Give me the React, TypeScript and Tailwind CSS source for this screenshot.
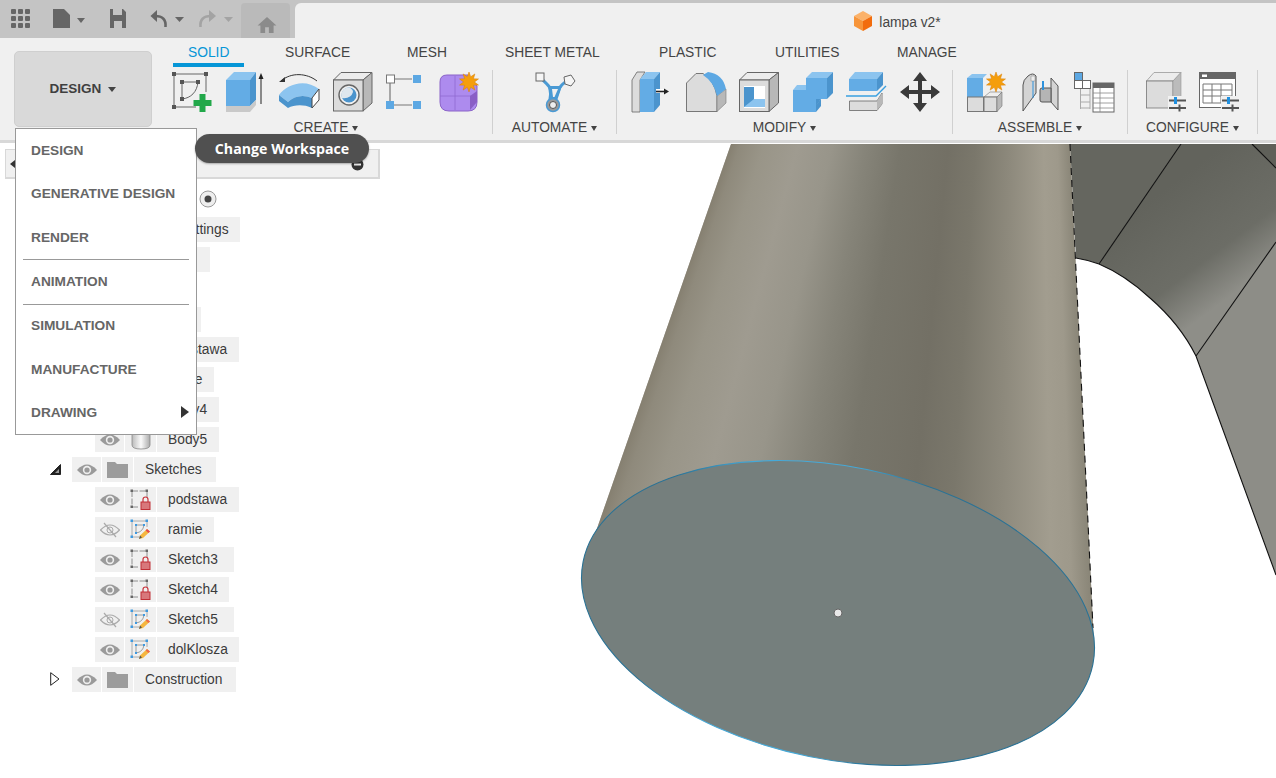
import React from 'react';

// ---- small drawn glyphs ----
const Caret = ({ className = 'border-t-[#444]' }: { className?: string }) => (
  <span className={`inline-block w-0 h-0 border-l-[4px] border-r-[4px] border-t-[5px] border-l-transparent border-r-transparent ${className}`} />
);

const SmallCaret = () => (
  <span className="inline-block w-0 h-0 border-l-[3px] border-r-[3px] border-t-[5px] border-l-transparent border-r-transparent border-t-[#444]" />
);

const Ic = ({ children }: { children: React.ReactNode }) => (
  <svg width="40" height="40" viewBox="0 0 40 40" className="shrink-0 overflow-visible">{children}</svg>
);

const Star = ({ cx, cy, r }: { cx: number; cy: number; r: number }) => {
  const pts: string[] = [];
  for (let i = 0; i < 20; i++) {
    const a = (i * Math.PI) / 10 - Math.PI / 2;
    const q = i % 2 ? r * 0.55 : r;
    pts.push(`${cx + q * Math.cos(a)},${cy + q * Math.sin(a)}`);
  }
  return <polygon points={pts.join(' ')} fill="#f59e0b" stroke="#d97f06" strokeWidth="0.5" />;
};

const SketchIcon = () => (
  <Ic>
    <path d="M2 2H34M2 2V35M2 35H24M34 2V20" stroke="#666" strokeWidth="1" fill="none" />
    <path d="M10 10H26M10 10V27M26 10C25 20 19 26 10 27" stroke="#666" strokeWidth="1" fill="none" />
    {[[0, 0], [32, 0], [0, 33], [8, 8], [24, 8], [8, 25]].map(([x, y], i) => (
      <rect key={i} x={x} y={y} width="4" height="4" fill="#555" />
    ))}
    <path d="M27.5 22h6v6h6v6h-6v6h-6v-6h-6v-6h6z" fill="#22a84a" />
  </Ic>
);

const ExtrudeIcon = () => (
  <Ic>
    <polygon points="0,8 8,0 30,0 24,8" fill="#8cc4ef" />
    <polygon points="0,8 24,8 24,34 0,34" fill="#63ace5" />
    <polygon points="24,8 30,0 30,28 24,34" fill="#4b94cd" />
    <polygon points="0,34 24,34 30,28 30,33 24,40 0,40" fill="#c9c9c9" />
    <path d="M35 4V32" stroke="#222" strokeWidth="1" />
    <polygon points="35,1 32.5,7 37.5,7" fill="#222" />
  </Ic>
);

const RevolveIcon = () => (
  <Ic>
    <path d="M2 9C12 0 28 1 38 9" stroke="#333" strokeWidth="1" fill="none" />
    <polygon points="0,10 6,5 6,10" fill="#333" />
    <path d="M0 23C8 12 26 6 40 17L33 26C24 22 15 24 9 30Z" fill="#8cc4ef" />
    <path d="M0 23L9 30C15 24 24 22 33 26V36C24 32 15 33 9 36L0 29Z" fill="#4b94cd" />
    <polygon points="33,26 40,17 40,28 33,36" fill="#fff" stroke="#444" strokeWidth="1" />
  </Ic>
);

const HoleIcon = () => (
  <Ic>
    <polygon points="0.5,8 8,0.5 39,0.5 30,8" fill="#ececec" stroke="#666" />
    <polygon points="30,8 39,0.5 39,31 30,39" fill="#b8b8b8" stroke="#666" />
    <rect x="0.5" y="8" width="29.5" height="31" fill="#dcdcdc" stroke="#666" />
    <circle cx="16" cy="23" r="10" fill="#f0f0f0" stroke="#666" strokeWidth="1.4" />
    <circle cx="16" cy="23" r="7.5" fill="#4b94cd" />
    <path d="M16 15.5A7.5 7.5 0 0 0 9 26Q18 27 20 20Q20 17 16 15.5Z" fill="#dfe7ee" />
  </Ic>
);

const PatternIcon = () => (
  <Ic>
    <path d="M8 7H26M4 11V29M8 33H26" stroke="#777" strokeWidth="1.2" />
    <rect x="0.5" y="3" width="8" height="8" fill="#fff" stroke="#777" />
    <rect x="27" y="3" width="8" height="8" fill="#5da8e3" />
    <rect x="0" y="29" width="8" height="8" fill="#5da8e3" />
    <rect x="27" y="29" width="8" height="8" fill="#5da8e3" />
  </Ic>
);

const PurpleIcon = () => (
  <Ic>
    <path d="M7 3H28L37 14V30Q37 39 28 39H9Q0 39 0 30V10Q0 3 7 3Z" fill="#ad8bee" stroke="#8a63c8" />
    <path d="M0 24H31M15 4V38" stroke="#8f6ad0" strokeWidth="0.8" />
    <polygon points="30,24 37,19 37,30 30,38" fill="#8a5fc6" />
    <Star cx={29} cy={10} r={10} />
  </Ic>
);

const AutomateIcon = () => (
  <Ic>
    <path d="M7 7C12 13 15 13 16 19L15 27H21L24 18C25 13 28 12 32 9" fill="none" stroke="#4a9ad4" strokeWidth="3" />
    <polygon points="13,14 27,14 21,29 15,29" fill="#4a9ad4" />
    <polygon points="17,17 23,17 19.5,25 18,25" fill="#f0f0f0" />
    <rect x="1" y="1" width="8" height="8" fill="#f5f5f5" stroke="#666" />
    <polygon points="29,5 36,3 40,9 36,14 30,12" fill="#f5f5f5" stroke="#666" />
    <circle cx="18" cy="33" r="6.5" fill="#9a9a9a" stroke="#4a9ad4" strokeWidth="1.5" />
    <circle cx="18" cy="33" r="3.5" fill="#eee" stroke="#555" />
  </Ic>
);

const PressPullIcon = () => (
  <Ic>
    <polygon points="0,8 5,0 13,0 8,8 8,40 0,40" fill="#dcdcdc" stroke="#666" strokeWidth="0.8" />
    <polygon points="8,7 14,0 28,0 22,7" fill="#8cc4ef" />
    <rect x="8" y="7" width="14" height="33" fill="#63ace5" />
    <polygon points="22,7 28,0 28,33 22,40" fill="#4b94cd" />
    <path d="M24 19H34" stroke="#fff" strokeWidth="4" />
    <path d="M24 19.5H33" stroke="#222" strokeWidth="1.6" />
    <polygon points="37,19.5 32,16.5 32,22.5" fill="#222" />
  </Ic>
);

const FilletIcon = () => (
  <Ic>
    <path d="M0.5 39.5V11L10 1.5H17Q28 8 31 24V39.5Z" fill="#dcdcdc" stroke="#777" />
    <polygon points="31,24 40,17 40,31 31,39.5" fill="#b8b8b8" stroke="#777" strokeWidth="0.6" />
    <path d="M17 3L22 0Q37 2 40 17L31 24Q28 10 17 3Z" fill="#5da8e3" />
  </Ic>
);

const ShellIcon = () => (
  <Ic>
    <polygon points="0.5,8 8,0.5 39.5,0.5 30,8" fill="#ececec" stroke="#666" />
    <polygon points="30,8 39.5,0.5 39.5,31 30,39.5" fill="#b8b8b8" stroke="#666" />
    <rect x="0.5" y="8" width="29.5" height="31.5" fill="#dcdcdc" stroke="#666" />
    <rect x="5" y="14" width="21" height="22" fill="#fff" />
    <polygon points="5,15 15,15 15,27 26,27 26,35 5,35" fill="#8cc4ef" />
    <polygon points="5,15 15,15 15,27 5,35" fill="#4b94cd" />
  </Ic>
);

const CombineIcon = () => (
  <Ic>
    <polygon points="13,6 19,0 40,0 34,6" fill="#8cc4ef" />
    <rect x="13" y="6" width="21" height="21" fill="#63ace5" />
    <polygon points="34,6 40,0 40,21 34,27" fill="#4b94cd" />
    <polygon points="0,18 4,13 13,13 13,18" fill="#8cc4ef" />
    <rect x="0" y="18" width="23" height="22" fill="#63ace5" />
    <polygon points="23,27 28,27 23,34" fill="#4b94cd" />
    <polygon points="23,33 28,27 28,34 23,40" fill="#4b94cd" />
  </Ic>
);

const SplitIcon = () => (
  <Ic>
    <polygon points="3,7 9,0 37,0 31,7" fill="#8cc4ef" />
    <rect x="3" y="7" width="28" height="12" fill="#63ace5" />
    <polygon points="31,7 37,0 37,13 31,19" fill="#4b94cd" />
    <path d="M0 24H30L40 14" stroke="#3aa0e0" strokeWidth="1.4" fill="none" />
    <polygon points="3.5,29 31,29 36,21 36,32 31,38.5 3.5,38.5" fill="#dcdcdc" stroke="#666" strokeWidth="0.8" />
    <polygon points="31,29 36,21 36,32 31,38.5" fill="#b8b8b8" />
  </Ic>
);

const MoveIcon = () => (
  <Ic>
    <path d="M20 0L27 9H22V18H31V13L40 20L31 27V22H22V31H27L20 40L13 31H18V22H9V27L0 20L9 13V18H18V9H13Z" fill="#3a3a3a" />
  </Ic>
);

const NewComponentIcon = () => (
  <Ic>
    <polygon points="0,6 5,2 20,2 16,6" fill="#8cc4ef" />
    <rect x="0" y="6" width="16" height="19" fill="#63ace5" />
    <rect x="0.5" y="25" width="16" height="14.5" fill="#dcdcdc" stroke="#777" />
    <polygon points="17,25 23,20 35,20 30,25" fill="#eee" stroke="#777" strokeWidth="0.6" />
    <rect x="17" y="25" width="13" height="14.5" fill="#dcdcdc" stroke="#777" />
    <polygon points="30,25 35,20 35,34 30,39.5" fill="#b8b8b8" stroke="#777" strokeWidth="0.6" />
    <Star cx={29} cy={10} r={10} />
  </Ic>
);

const JointIcon = () => (
  <Ic>
    <path d="M3 39V13Q3 8 8 4Q13 0 16 4V21L3 39Z" fill="#d4d4d4" stroke="#555" />
    <rect x="11" y="4" width="4" height="5" fill="#eee" stroke="#888" strokeWidth="0.5" />
    <path d="M13 9V26" stroke="#2e92dc" strokeWidth="1" />
    <path d="M31 6L38 14V38L31 30Z" fill="#d4d4d4" stroke="#555" />
    <path d="M22 16H31V30H22Q20 30 20 28V18Q20 16 22 16Z" fill="#b5b5b5" stroke="#555" />
    <path d="M23 9V18" stroke="#2e92dc" strokeWidth="2" />
  </Ic>
);

const TimelineIcon = () => (
  <Ic>
    <rect x="0.5" y="0.5" width="8" height="8" fill="#5da8e3" stroke="#666" />
    <rect x="0.5" y="8.5" width="8" height="8" fill="#fff" stroke="#666" />
    <rect x="8.5" y="8.5" width="8" height="8" fill="#fff" stroke="#666" />
    <path d="M6.5 17V37M16 17V37M6.5 23H16M6.5 30H16M6.5 36H16" stroke="#aaa" strokeWidth="1" />
    <rect x="19" y="11" width="21" height="29" fill="#fff" stroke="#666" />
    <rect x="19" y="11" width="21" height="5" fill="#666" />
    <path d="M19 21H40M19 26H40M19 31H40M19 36H40M26 16V40" stroke="#888" strokeWidth="0.8" />
  </Ic>
);

const Slider = ({ x, y }: { x: number; y: number }) => (
  <g transform={`translate(${x} ${y})`}>
    <rect x="-1" y="-3" width="19" height="16" fill="#f0f0f0" />
    <path d="M0 1.5H17M0 9H17" stroke="#555" strokeWidth="2" />
    <rect x="5" y="-2" width="3" height="7" fill="#1f90e0" />
    <rect x="9.5" y="5.5" width="2" height="7" fill="#555" />
  </g>
);

const ConfigCubeIcon = () => (
  <Ic>
    <polygon points="0.5,9 8,0.5 35,0.5 27,9" fill="#ececec" stroke="#999" strokeWidth="0.8" />
    <rect x="0.5" y="9" width="26.5" height="27" fill="#dcdcdc" stroke="#777" strokeWidth="0.8" />
    <polygon points="27,9 35,0.5 35,28 27,36" fill="#bbb" stroke="#999" strokeWidth="0.6" />
    <Slider x={23} y={27} />
  </Ic>
);

const ConfigTableIcon = () => (
  <Ic>
    <rect x="0.5" y="0.5" width="36" height="35" fill="#fff" stroke="#666" />
    <rect x="0" y="0" width="37" height="7" fill="#666" />
    <rect x="3" y="2.5" width="5" height="2.5" fill="#fff" />
    <path d="M4 12H33V31H4ZM4 18H33M4 24H33M13 12V31M22 12V31" fill="none" stroke="#777" />
    <Slider x={23} y={27} />
  </Ic>
);

// ---- browser tree glyphs ----
const Eye = ({ off }: { off?: boolean }) =>
  off ? (
    <svg width="20" height="16" viewBox="0 0 20 16">
      <path d="M0.5 8Q10 -2 19.5 8Q10 18 0.5 8Z" fill="none" stroke="#aaa" strokeWidth="1.2" />
      <circle cx="10" cy="8" r="3" fill="none" stroke="#aaa" />
      <path d="M4 1L16 15" stroke="#aaa" strokeWidth="1.2" />
    </svg>
  ) : (
    <svg width="20" height="14" viewBox="0 0 20 14">
      <path d="M0 7Q10 -4 20 7Q10 18 0 7Z" fill="#9a9a9a" />
      <circle cx="10" cy="7" r="4.2" fill="#eee" />
      <circle cx="10" cy="7" r="2.6" fill="#9a9a9a" />
    </svg>
  );

const Folder = () => (
  <svg width="21" height="16" viewBox="0 0 21 16">
    <path d="M0 0H8L10 2H21V16H0Z" fill="#9c9c9c" />
  </svg>
);

const Cylinder = () => (
  <svg width="20" height="20" viewBox="0 0 20 20">
    <defs>
      <linearGradient id="cyl" x1="0" x2="1" y1="0" y2="0">
        <stop offset="0" stopColor="#bbb" />
        <stop offset="0.5" stopColor="#fafafa" />
        <stop offset="1" stopColor="#aaa" />
      </linearGradient>
    </defs>
    <path d="M1 0V15Q1 19 10 19Q19 19 19 15V0Z" fill="url(#cyl)" stroke="#888" strokeWidth="0.8" />
  </svg>
);

const TreeSketch = ({ kind }: { kind: 'lock' | 'edit' | 'editRed' }) => {
  const c = kind === 'lock' ? '#666' : '#3f9ae0';
  return (
    <svg width="21" height="21" viewBox="0 0 21 21">
      <path d="M2 2H17M2 2V18M2 18H9M17 2V8" stroke={kind === 'lock' ? '#777' : '#999'} strokeWidth="0.8" fill="none" strokeDasharray={kind === 'lock' ? '6 1.5' : undefined} />
      {kind !== 'lock' && <path d="M6 6H14M6 6V14M14 6Q13 13 6 14" stroke="#888" strokeWidth="0.8" fill="none" />}
      {[[0.5, 0.5], [15.5, 0.5], [0.5, 16.5]].map(([x, y], i) => (
        <rect key={i} x={x} y={y} width="2.5" height="2.5" fill={c} />
      ))}
      {kind !== 'lock' && [[5, 5], [13, 5], [5, 13]].map(([x, y], i) => (
        <rect key={i} x={x} y={y} width="2" height="2" fill={c} />
      ))}
      {kind === 'lock' ? (
        <g>
          <path d="M13 13V10.5Q13 8 15.5 8Q18 8 18 10.5V13" fill="none" stroke="#c8343c" strokeWidth="1.2" />
          <rect x="11" y="13" width="9" height="7.5" fill="#d8777b" stroke="#c02f36" />
        </g>
      ) : (
        <g>
          <path d="M9 20L10 16.5L17 10L20 12.5L13 19Z" fill="#f5b63f" />
          <path d="M17 10L20 12.5L18.5 14L15.6 11.4Z" fill={kind === 'editRed' ? '#e5484d' : '#ef6b4a'} />
          <path d="M9 20L10 16.5L12 18.5Z" fill="#555" />
        </g>
      )}
    </svg>
  );
};

type Row = { left: number; name: string; nameW: number; icon: React.ReactNode; off?: boolean; radio?: boolean; tri?: 'open' | 'closed' };

const rows: Row[] = [
  { left: 28, name: '', nameW: 97, icon: <Folder />, radio: true },
  { left: 39, name: 'Document Settings', nameW: 139, icon: <Folder /> },
  { left: 43, name: '', nameW: 105, icon: <Folder /> },
  { left: 72, name: '', nameW: 50, icon: <Folder /> },
  { left: 72, name: '', nameW: 67, icon: <Folder /> },
  { left: 95, name: 'podstawa', nameW: 82, icon: <Cylinder /> },
  { left: 95, name: 'ramie', nameW: 57, icon: <Cylinder /> },
  { left: 95, name: 'Body4', nameW: 62, icon: <Cylinder /> },
  { left: 95, name: 'Body5', nameW: 62, icon: <Cylinder /> },
  { left: 72, name: 'Sketches', nameW: 82, icon: <Folder />, tri: 'open' },
  { left: 95, name: 'podstawa', nameW: 82, icon: <TreeSketch kind="lock" /> },
  { left: 95, name: 'ramie', nameW: 57, icon: <TreeSketch kind="editRed" />, off: true },
  { left: 95, name: 'Sketch3', nameW: 77, icon: <TreeSketch kind="lock" /> },
  { left: 95, name: 'Sketch4', nameW: 72, icon: <TreeSketch kind="lock" /> },
  { left: 95, name: 'Sketch5', nameW: 77, icon: <TreeSketch kind="edit" />, off: true },
  { left: 95, name: 'dolKlosza', nameW: 82, icon: <TreeSketch kind="edit" /> },
  { left: 72, name: 'Construction', nameW: 102, icon: <Folder />, tri: 'closed' },
];

// ---- viewport drawing ----
const coneStops: [number, string][] = [
  [0, '#857f70'],
  [0.03, '#8f8a7c'],
  [0.1, '#999588'],
  [0.2, '#9f9b90'],
  [0.3, '#98958a'],
  [0.4, '#868479'],
  [0.5, '#78766b'],
  [0.64, '#737065'],
  [0.72, '#7a776b'],
  [0.82, '#8d897c'],
  [0.92, '#a29d8f'],
  [0.96, '#9e998b'],
  [1, '#888476'],
];

// one gradient stretched over every scanline, so the shading fans out with the cone
const ConeRows = () => {
  const out: React.ReactNode[] = [];
  for (let y = 144; y < 650; y++) {
    const f = y - 144;
    const l = 731 - (145 / 416) * f;
    const r = 1070 + (24 / 501) * f;
    out.push(<rect key={y} x={l - 1} y={y} width={r - l + 2} height="1.5" fill="url(#coneShade)" />);
  }
  return <g clipPath="url(#coneClip)">{out}</g>;
};

const Viewport = () => (
  <svg className="absolute inset-0" width="1276" height="635" viewBox="0 143 1276 635">
    <defs>
      <linearGradient id="arm2" gradientUnits="userSpaceOnUse" x1="1150" y1="200" x2="1225" y2="300">
        <stop offset="0" stopColor="#62635c" />
        <stop offset="0.65" stopColor="#6c6d66" />
        <stop offset="1" stopColor="#8e8e88" />
      </linearGradient>
      <linearGradient id="coneShade" x1="0" x2="1" y1="0" y2="0">
        {coneStops.map(([o, c]) => (
          <stop key={o} offset={o} stopColor={c} />
        ))}
      </linearGradient>
      <linearGradient id="rim" gradientUnits="userSpaceOnUse" x1="650" y1="0" x2="900" y2="0">
        <stop offset="0" stopColor="#2a7295" />
        <stop offset="0.3" stopColor="#45a9d8" />
        <stop offset="0.7" stopColor="#45a9d8" />
        <stop offset="1" stopColor="#2a7295" />
      </linearGradient>
      <clipPath id="coneClip">
        <polygon points="731,144 1070,144 1094,645 586,560" />
      </clipPath>
    </defs>
    <path d="M1070 144H1181L1099 264Q1088 260 1076 258Z" fill="#65665f" />
    <path d="M1181 144H1252L1276 168V242L1196 356Q1180 324 1150 298Q1125 275 1099 264Z" fill="url(#arm2)" />
    <polygon points="1252,144 1276,144 1276,168" fill="#5f6059" />
    <polygon points="1196,356 1276,242 1276,575" fill="#8d8d87" />
    <path d="M1181 144L1099 264M1252 144L1276 168M1276 242L1196 356" stroke="#111" strokeWidth="1.1" fill="none" />
    <path d="M1076 258Q1088 260 1099 264Q1125 275 1150 298Q1180 324 1196 356L1276 575" stroke="#111" strokeWidth="1.1" fill="none" />
    <ConeRows />
    <path d="M1070 144L1093 628" stroke="#111" strokeWidth="1.1" strokeDasharray="7 5" fill="none" />
    <ellipse cx="838" cy="613" rx="260" ry="146.4" transform="rotate(11.4 838 613)" fill="#757f7d" stroke="url(#rim)" strokeWidth="1.1" />
    <circle cx="838" cy="613" r="4" fill="#e8e8e8" stroke="#666" strokeWidth="1" />
    <rect x="0" y="143" width="1276" height="1" fill="#fff" />
  </svg>
);

const App: React.FC = () => {
  return (
    <div className="relative w-[1276px] h-[778px] overflow-hidden bg-white flex flex-col font-['Liberation_Sans',Arial,sans-serif] text-[13.8px] text-[#444]">
      {/* Title bar */}
      <div className="h-[38px] bg-[#c4c4c4] flex shrink-0 pt-[3px]">
        <div className="w-[241px] relative flex items-start">
          <svg width="241" height="35" viewBox="0 0 241 35" className="shrink-0">
            <g fill="#666">
              {[0, 7, 14].flatMap((y) => [0, 7, 14].map((x) => (
                <rect key={`${x}-${y}`} x={11 + x} y={6 + y} width="5" height="5" rx="1" />
              )))}
              <path d="M53 6H64L70 12V25H53Z" />
              <path d="M77 15H85L81 20Z" />
              <path d="M110 6H123L126 9V25H110ZM113 6V12H122V6ZM114 18V25H122V18Z" fillRule="evenodd" />
              <path d="M175 14H184L179.5 19Z" />
            </g>
            <path d="M165.5 24Q166.5 13 155 13" stroke="#666" strokeWidth="2.6" fill="none" />
            <polygon points="150.5,13 157,7 157,19" fill="#666" />
            <path d="M200.5 24Q199.5 13 211 13" stroke="#a3a3a3" strokeWidth="2.6" fill="none" />
            <polygon points="216,13 209,7 209,19" fill="#a3a3a3" />
            <path d="M224 14H233L228.5 19Z" fill="#a3a3a3" />
          </svg>
        </div>
        <div className="w-[49px] bg-[#bababa] rounded-t-[4px] flex items-center justify-center pt-[8px] pl-[2px]">
          <svg width="20" height="16" viewBox="0 0 20 17">
            <path d="M10 0L20 9H17V17H12V11H8V17H3V9H0Z" fill="#8b8b8b" />
          </svg>
        </div>
        <div className="w-[5px]" />
        <div className="flex-1 bg-[#f0f0f0] rounded-tl-[6px] flex items-center justify-center pl-[224px] pt-[5px] gap-[7px]">
          <svg width="18" height="20" viewBox="0 0 18 20" className="mb-[4px]">
            <polygon points="9,0 18,5 9,10 0,5" fill="#fbb26a" />
            <polygon points="0,5 9,10 9,20 0,15" fill="#f7953a" />
            <polygon points="18,5 9,10 9,20 18,15" fill="#f26c0d" />
          </svg>
          <span className="text-[#444]">lampa v2*</span>
        </div>
      </div>

      {/* Ribbon */}
      <div className="h-[105px] bg-[#f0f0f0] border-b-[3px] border-[#d8d8d8] flex shrink-0 pl-[14px]">
        <div className="pt-[13px] w-[146px] shrink-0">
          <div className="w-[138px] h-[76px] bg-[#d9d9d9] border border-[#cfcfcf] rounded-[5px] flex items-center justify-center gap-[7px]">
            <span className="font-bold text-[13.5px] text-[#3f3f3f]">DESIGN</span>
            <Caret />
          </div>
        </div>
        <div className="flex-1 flex flex-col">
          <div className="relative h-[29px] flex items-center shrink-0 pt-[2px]">
            <div className="absolute left-[13px] top-[25px] w-[71px] h-[4px] bg-[#0696d7]" />
            <span className="ml-[28px] w-[97px] text-[#0696d7]">SOLID</span>
            <span className="w-[122px]">SURFACE</span>
            <span className="w-[98px]">MESH</span>
            <span className="w-[154px]">SHEET METAL</span>
            <span className="w-[116px]">PLASTIC</span>
            <span className="w-[122px]">UTILITIES</span>
            <span>MANAGE</span>
          </div>
          <div className="flex-1 flex pt-[3px]">
            {[
              { label: 'CREATE', w: 'w-[333px]', shift: '', icons: [<SketchIcon key="1" />, <ExtrudeIcon key="2" />, <RevolveIcon key="3" />, <HoleIcon key="4" />, <PatternIcon key="5" />, <PurpleIcon key="6" />] },
              { label: 'AUTOMATE', w: 'w-[124px]', shift: '', icons: [<AutomateIcon key="1" />] },
              { label: 'MODIFY', w: 'w-[336px]', shift: 'ml-[3px]', icons: [<PressPullIcon key="1" />, <FilletIcon key="2" />, <ShellIcon key="3" />, <CombineIcon key="4" />, <SplitIcon key="5" />, <MoveIcon key="6" />] },
              { label: 'ASSEMBLE', w: 'w-[175px]', shift: '', icons: [<NewComponentIcon key="1" />, <JointIcon key="2" />, <TimelineIcon key="3" />] },
              { label: 'CONFIGURE', w: 'w-[130px]', shift: '', icons: [<ConfigCubeIcon key="1" />, <ConfigTableIcon key="2" />] },
            ].map((g) => (
              <div key={g.label} className={`${g.w} h-[64px] pt-[2px] shrink-0 border-r-[1px] border-[#d0d0d0] flex flex-col items-center`}>
                <div className={`h-[40px] flex gap-[13.5px] ${g.shift}`}>{g.icons}</div>
                <div className="mt-[7px] h-[18px] flex items-center gap-[4px]">
                  <span>{g.label}</span>
                  <SmallCaret />
                </div>
              </div>
            ))}
          </div>
        </div>
      </div>

      {/* Viewport and browser */}
      <div className="relative flex-1">
        <Viewport />
        <div className="absolute left-[5px] top-[6px] w-[375px] h-[30px] bg-[#f0f0f0] border border-[#d8d8d8] border-r-[2px] border-b-[2px] flex items-center justify-between pl-[4px] pr-[14px]">
          <span className="w-0 h-0 border-y-[4px] border-r-[5px] border-y-transparent border-r-[#333]" />
          <svg width="13" height="13" viewBox="0 0 13 13" className="mt-[1px]">
            <circle cx="6.5" cy="6.5" r="6" fill="#333" />
            <rect x="3" y="5.5" width="7" height="2" fill="#eee" />
          </svg>
        </div>
        <div className="absolute left-0 top-[44px] flex flex-col gap-[5px]">
          {rows.map((r, i) => (
            <div key={i} className="relative h-[25px] flex gap-px" style={{ marginLeft: r.left }}>
              {r.tri === 'open' && (
                <svg width="11" height="11" viewBox="0 0 11 11" className="absolute left-[-22px] top-[7px]">
                  <polygon points="0.5,10.5 10.5,0.5 10.5,10.5" fill="#222" stroke="#222" />
                  <polygon points="5,9 9,5 9,9" fill="#999" />
                </svg>
              )}
              {r.tri === 'closed' && (
                <svg width="10" height="14" viewBox="0 0 10 14" className="absolute left-[-22px] top-[5px]">
                  <polygon points="0.7,0.7 9,7 0.7,13.3" fill="#fff" stroke="#222" strokeWidth="1" />
                </svg>
              )}
              <div className="w-[29px] bg-[#f0f0f0] flex items-center justify-center">
                <Eye off={r.off} />
              </div>
              <div className="w-[31px] bg-[#f0f0f0] flex items-center justify-center">{r.icon}</div>
              <div className="bg-[#f0f0f0] pl-[11px] pt-[1px] flex items-center text-[#3b3b3b] whitespace-nowrap" style={{ width: r.nameW }}>
                {r.name}
              </div>
              {r.radio && (
                <svg width="18" height="18" viewBox="0 0 18 18" className="absolute left-[171px] top-[3px]">
                  <circle cx="9" cy="9" r="8" fill="#eee" stroke="#999" />
                  <circle cx="9" cy="9" r="3.5" fill="#444" />
                </svg>
              )}
            </div>
          ))}
        </div>
      </div>

      {/* Workspace menu */}
      <div className="absolute left-[15px] top-[128px] w-[182px] h-[307px] bg-white border border-[#999] font-bold text-[13.7px] text-[#666]">
        {['DESIGN', 'GENERATIVE DESIGN', 'RENDER', '-', 'ANIMATION', '-', 'SIMULATION', 'MANUFACTURE', 'DRAWING'].map((m, i) =>
          m === '-' ? (
            <div key={i} className="h-px bg-[#999] mx-[7px]" />
          ) : (
            <div key={i} className="relative h-[43.4px] pl-[15px] pt-[1px] flex items-center">
              {m}
              {m === 'DRAWING' && (
                <span className="absolute left-[165px] top-[15px] w-0 h-0 border-y-[6px] border-l-[8px] border-y-transparent border-l-[#333]" />
              )}
            </div>
          ),
        )}
      </div>

      {/* Tooltip */}
      <div className="absolute left-[195px] top-[134px] w-[174px] h-[29px] rounded-full bg-[#505050] text-white font-bold text-[14.2px] font-['Open_Sans',sans-serif] flex items-center justify-center shadow-[0_1px_2px_rgba(0,0,0,0.3)]">
        Change Workspace
      </div>
    </div>
  );
};

export default App;
